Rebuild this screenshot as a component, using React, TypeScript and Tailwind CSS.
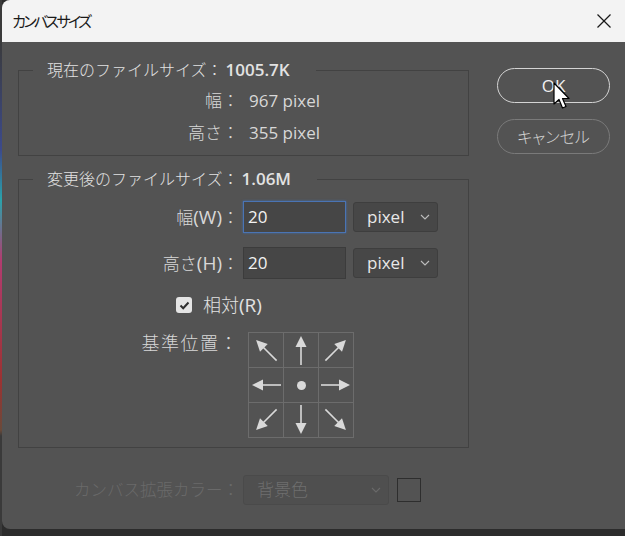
import React from "react";

const Arrow = ({ angle }: { angle: number }) => (
  <svg width="34" height="34" viewBox="0 0 34 34">
    <g transform={`rotate(${angle} 17 17)`}>
      <line x1="17" y1="32" x2="17" y2="12" stroke="#d9d9d9" strokeWidth="1.6" />
      <polygon points="17,3 11.5,14 22.5,14" fill="#d9d9d9" />
    </g>
  </svg>
);

const Cell = ({ children }: { children?: React.ReactNode }) => (
  <div className="w-[35px] h-[35px] border-r border-b border-[#6c6c6c] flex items-center justify-center">
    {children}
  </div>
);

const Chevron = ({ color }: { color: string }) => (
  <svg width="10" height="6" viewBox="0 0 10 6">
    <polyline points="1,1 5,5 9,1" fill="none" stroke={color} strokeWidth="1.1" />
  </svg>
);

export default function App() {
  const jp = "font-['Noto_Sans','Noto_Sans_CJK_JP',sans-serif]";
  const os = "font-['Open_Sans',sans-serif]";
  return (
    <div className={`w-[625px] h-[536px] flex bg-[#2c2c2c] overflow-hidden ${jp}`}>
      <div className="w-[2px] h-full bg-[linear-gradient(to_bottom,#3a3a3a_0px,#3a3a3a_40px,#3c4a8c_150px,#2aa3ab_200px,#b23c70_260px,#9c3232_380px,#6a4a3a_430px,#3a3a3a_436px)]" />
      <div className="relative flex-1 h-[529px] flex flex-col rounded-tl-[8px] rounded-bl-[8px] overflow-hidden bg-[#535353]">
        {/* title bar */}
        <div className="h-[42px] bg-[#f3f3f3] flex items-center justify-between pl-[10px] pr-[13px]">
          <span className="text-[15px] tracking-[-2.6px] text-[#1a1a1a] [font-feature-settings:'palt'] leading-none">カンバスサイズ</span>
          <svg width="16" height="16" viewBox="0 0 16 16">
            <line x1="1.5" y1="1.5" x2="14.5" y2="14.5" stroke="#1a1a1a" strokeWidth="1.2" />
            <line x1="14.5" y1="1.5" x2="1.5" y2="14.5" stroke="#1a1a1a" strokeWidth="1.2" />
          </svg>
        </div>

        {/* body */}
        <div className="flex pl-[16px] pt-[17px]">
          <div className="w-[451px] flex flex-col">
            {/* group 1 */}
            <fieldset className="border border-[#424242] pb-[6px]">
              <legend className="ml-[14px] pl-[14px] pr-[26px] leading-[22px] text-[16px] font-light text-[#e2e2e2]">
                現在のファイルサイズ：<span className={`text-[17px] font-semibold ml-[3px] ${os}`}>1005.7K</span>
              </legend>
              <div className="flex items-center h-[32px] mt-[4px]">
                <div className="w-[220px] text-right text-[17px] font-light text-[#d8d8d8]">幅：</div>
                <div className={`ml-[10px] text-[17px] text-[#d8d8d8] ${os}`}>967 pixel</div>
              </div>
              <div className="flex items-center h-[32px]">
                <div className="w-[220px] text-right text-[17px] font-light text-[#d8d8d8]">高さ：</div>
                <div className={`ml-[10px] text-[17px] text-[#d8d8d8] ${os}`}>355 pixel</div>
              </div>
            </fieldset>

            {/* group 2 */}
            <fieldset className="border border-[#424242] mt-[12px] pb-[9px]">
              <legend className="ml-[14px] pl-[14px] pr-[26px] leading-[22px] text-[16px] font-light text-[#e2e2e2]">
                変更後のファイルサイズ：<span className={`text-[17px] font-semibold ml-[3px] ${os}`}>1.06M</span>
              </legend>
              <div className="flex items-center mt-[11px]">
                <div className="w-[220px] text-right text-[17px] font-light text-[#d8d8d8]">
                  幅<span className={`text-[19px] font-normal ${os}`}>(W)</span>：
                </div>
                <div className={`ml-[4px] w-[103px] h-[32px] bg-[#464646] border border-[#4a74b4] shadow-[0_0_2px_#3d6cb0] flex items-center pl-[4px] text-[17px] text-[#f2f2f2] ${os}`}>20</div>
                <div className={`ml-[7px] w-[85px] h-[30px] bg-[#474747] border border-[#3e3e3e] rounded-[3px] flex items-center justify-between pl-[13px] pr-[7px] text-[17px] text-[#e8e8e8] ${os}`}>
                  pixel
                  <Chevron color="#bdbdbd" />
                </div>
              </div>
              <div className="flex items-center mt-[14px]">
                <div className="w-[220px] text-right text-[17px] font-light text-[#d8d8d8]">
                  高さ<span className={`text-[19px] font-normal ${os}`}>(H)</span>：
                </div>
                <div className={`ml-[4px] w-[103px] h-[32px] bg-[#464646] border border-[#3c3c3c] flex items-center pl-[4px] text-[17px] text-[#f2f2f2] ${os}`}>20</div>
                <div className={`ml-[7px] w-[85px] h-[30px] bg-[#474747] border border-[#3e3e3e] rounded-[3px] flex items-center justify-between pl-[13px] pr-[7px] text-[17px] text-[#e8e8e8] ${os}`}>
                  pixel
                  <Chevron color="#bdbdbd" />
                </div>
              </div>
              <div className="flex items-center h-[22px] mt-[15px] ml-[157px]">
                <div className="w-[16px] h-[16px] rounded-[3px] bg-[#e4e4e4] flex items-center justify-center">
                  <svg width="11" height="9" viewBox="0 0 11 9">
                    <polyline points="1.5,4.5 4.2,7.2 9.5,1.5" fill="none" stroke="#2e2e2e" strokeWidth="2" />
                  </svg>
                </div>
                <span className="ml-[11px] text-[18px] font-light text-[#e2e2e2]">
                  相対<span className={`text-[19px] font-normal ${os}`}>(R)</span>
                </span>
              </div>
              <div className="flex items-start mt-[16px]">
                <div className="w-[220px] text-right text-[18px] tracking-[1.5px] leading-[22px] font-light text-[#d8d8d8]">基準位置：</div>
                <div className="ml-[9px] grid grid-cols-3 border-l border-t border-[#6c6c6c]">
                  <Cell><Arrow angle={-45} /></Cell>
                  <Cell><Arrow angle={0} /></Cell>
                  <Cell><Arrow angle={45} /></Cell>
                  <Cell><Arrow angle={-90} /></Cell>
                  <Cell>
                    <div className="w-[9px] h-[9px] rounded-full bg-[#d9d9d9]" />
                  </Cell>
                  <Cell><Arrow angle={90} /></Cell>
                  <Cell><Arrow angle={-135} /></Cell>
                  <Cell><Arrow angle={180} /></Cell>
                  <Cell><Arrow angle={135} /></Cell>
                </div>
              </div>
            </fieldset>

            {/* bottom row */}
            <div className="flex items-center mt-[27px]">
              <div className="w-[221px] text-right text-[16.5px] font-light text-[#6a6a6a]">カンバス拡張カラー：</div>
              <div className="ml-[4px] w-[146px] h-[30px] bg-[#4f4f4f] border border-[#4a4a4a] rounded-[3px] flex items-center justify-between pl-[13px] pr-[7px] text-[17px] font-light text-[#6e6e6e]">
                背景色
                <Chevron color="#6a6a6a" />
              </div>
              <div className="ml-[8px] w-[24px] h-[24px] border border-[#2e2e2e]" />
            </div>
          </div>

          {/* buttons */}
          <div className="ml-[28px] mt-[9px] flex flex-col">
            <div className={`w-[113px] h-[35px] rounded-full border-[1.5px] border-[#d4d4d4] flex items-center justify-center text-[17px] text-[#f0f0f0] ${os}`}>
              OK
            </div>
            <div className="mt-[16px] w-[113px] h-[35px] rounded-full border border-[#7a7a7a] flex items-center justify-center text-[16px] font-light text-[#d4d4d4] [font-feature-settings:'palt']">
              キャンセル
            </div>
          </div>
        </div>

        {/* cursor */}
        <svg className="absolute left-[551px] top-[82px]" width="20" height="29" viewBox="0 0 20 29">
          <path d="M1 1 L1 22 L6 17.5 L9.5 26 L13 24.5 L9.5 16.5 L16 16.5 Z" fill="#ffffff" stroke="#000000" strokeWidth="1.2" strokeLinejoin="round" />
        </svg>
      </div>
    </div>
  );
}
